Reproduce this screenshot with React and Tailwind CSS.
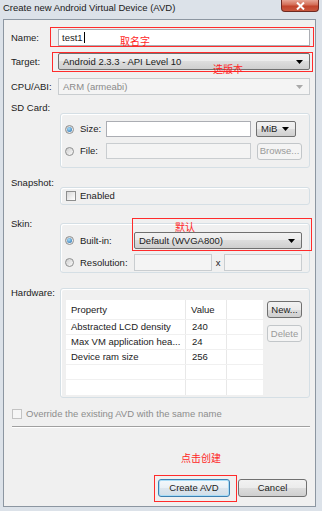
import React from 'react';

const Arrow = ({ color = '#000' }) => (
  <svg width="7" height="4" viewBox="0 0 7 4">
    <path d="M0 0h7L3.5 4z" fill={color} />
  </svg>
);

function Radio({ checked }) {
  return (
    <span className="inline-flex h-[9px] w-[9px] shrink-0 items-center justify-center rounded-full border border-[#8e8f8f] bg-linear-to-br from-[#cfcfcf] to-[#fafafa]">
      {checked && (
        <span className="h-[5px] w-[5px] rounded-full bg-[radial-gradient(circle_at_40%_35%,#a9defa,#1f67a8)]" />
      )}
    </span>
  );
}

function Check({ disabled }) {
  return (
    <span
      className={
        disabled
          ? 'inline-block h-[10px] w-[10px] shrink-0 border border-[#c3c3c3] bg-[#f6f6f6]'
          : 'inline-block h-[10px] w-[10px] shrink-0 border border-[#8e8f8f] bg-linear-to-br from-[#d8d8d8] to-white'
      }
    />
  );
}

function Combo({ text, className = '', disabled }) {
  if (disabled) {
    return (
      <div className={`flex items-center justify-between border border-[#c9cdd0] bg-[#f4f4f4] pl-[4px] pr-[6px] text-[#8a8a8a] ${className}`}>
        <span>{text}</span>
        <Arrow color="#a9a9a9" />
      </div>
    );
  }
  return (
    <div className={`flex items-center justify-between rounded-[2px] border border-[#707070] bg-[linear-gradient(#f2f2f2,#ebebeb_50%,#dddddd_50%,#cfcfcf)] pl-[4px] pr-[6px] ${className}`}>
      <span>{text}</span>
      <Arrow />
    </div>
  );
}

function Btn({ children, className = '', disabled, focus }) {
  let look = 'border-[#707070] bg-[linear-gradient(#f2f2f2,#ebebeb_50%,#dddddd_50%,#cfcfcf)]';
  if (disabled) look = 'border-[#c2c6c9] bg-[#f4f4f4] text-[#9a9a9a]';
  if (focus) look = 'border-[#3c7fb1] bg-[linear-gradient(#f3f8fb,#e9f0f5_50%,#dce6ee_50%,#d3dee8)] shadow-[inset_0_0_0_1px_#a9dcf6]';
  return (
    <div className={`flex items-center justify-center rounded-[3px] border ${look} ${className}`}>
      {children}
    </div>
  );
}

function Row({ label, children, className = '' }) {
  return (
    <div className={`flex h-[17px] items-center ${className}`}>
      <span className="w-[47px] shrink-0">{label}</span>
      {children}
    </div>
  );
}

const Group = ({ className = '', children }) => (
  <div className={`ml-[2px] flex-1 rounded-[3px] border border-[#d5dfe5] shadow-[inset_1px_1px_0_#fff] ${className}`}>
    {children}
  </div>
);

const hw = [
  ['Abstracted LCD density', '240'],
  ['Max VM application hea...', '24'],
  ['Device ram size', '256'],
  ['', ''],
  ['', ''],
];

export default function App() {
  return (
    <div className="relative h-[511px] w-[322px] overflow-hidden whitespace-nowrap bg-[#dce2e9] font-['Liberation_Sans',Arial,sans-serif] text-[9.5px] leading-none text-[#1b1b1b]">
      <div className="flex h-[19px] items-start justify-between pl-[3px] pr-[3px]">
        <span className="pt-[3px] text-[9.5px] text-[#202020]">Create new Android Virtual Device (AVD)</span>
        <div className="flex h-[12px] w-[38px] items-center justify-center rounded-b-[4px] border border-t-0 border-[#6e2a22] bg-[linear-gradient(#e7a595,#d36c55_45%,#c2442c_55%,#c9583f)]">
          <svg width="9" height="8" viewBox="0 0 9 8">
            <path d="M1 0.5 L8 7.5 M8 0.5 L1 7.5" stroke="#fff" strokeWidth="2" />
          </svg>
        </div>
      </div>

      <div className="ml-[3px] flex h-[488px] w-[313px] flex-col border border-[#8c96a1] bg-[#f0f0f0] pb-[9px] pl-[7px] pr-[5px] pt-[9px]">
        <Row label="Name:">
          <div className="flex h-[17px] flex-1 items-center border border-[#abadb3] bg-white pl-[3px]">
            <span>test1</span>
            <span className="ml-[1px] h-[11px] w-[1px] bg-black" />
          </div>
        </Row>
        <Row label="Target:" className="mt-[7px]">
          <Combo text="Android 2.3.3 - API Level 10" className="h-[17px] flex-1" />
        </Row>
        <Row label="CPU/ABI:" className="mt-[8px]">
          <Combo text="ARM (armeabi)" className="h-[17px] flex-1" disabled />
        </Row>

        {/* SD card */}
        <div className="mt-[6px] flex items-start">
          <span className="flex h-[13px] w-[47px] shrink-0 items-center">SD Card:</span>
          <Group className="mt-[12px] h-[55px] pt-[7px]">
            <div className="flex h-[16px] items-center">
              <div className="flex w-[45px] items-center gap-[6px] pl-[4px]">
                <Radio checked />
                <span>Size:</span>
              </div>
              <div className="h-[16px] w-[145px] border border-[#abadb3] bg-white" />
              <Combo text="MiB" className="ml-[5px] h-[16px] w-[40px]" />
            </div>
            <div className="mt-[6px] flex h-[16px] items-center">
              <div className="flex w-[45px] items-center gap-[6px] pl-[4px]">
                <Radio />
                <span>File:</span>
              </div>
              <div className="h-[16px] w-[145px] border border-[#c9cdd0] bg-[#f4f4f4]" />
              <Btn disabled className="ml-[6px] h-[17px] w-[45px]">Browse...</Btn>
            </div>
          </Group>
        </div>

        {/* Snapshot */}
        <div className="mt-[8px] flex items-start">
          <span className="flex h-[13px] w-[47px] shrink-0 items-center">Snapshot:</span>
          <Group className="mt-[11px] flex h-[18px] items-center gap-[4px] pl-[5px]">
            <Check />
            <span>Enabled</span>
          </Group>
        </div>

        {/* Skin */}
        <div className="mt-[12px] flex items-start">
          <span className="flex h-[13px] w-[47px] shrink-0 items-center">Skin:</span>
          <Group className="mt-[6px] h-[50px] pt-[8px]">
            <div className="flex h-[17px] items-center">
              <div className="flex w-[73px] items-center gap-[6px] pl-[4px]">
                <Radio checked />
                <span>Built-in:</span>
              </div>
              <Combo text="Default (WVGA800)" className="h-[17px] w-[168px]" />
            </div>
            <div className="mt-[5px] flex h-[17px] items-center">
              <div className="flex w-[73px] items-center gap-[6px] pl-[4px]">
                <Radio />
                <span>Resolution:</span>
              </div>
              <div className="h-[17px] w-[78px] border border-[#c9cdd0] bg-[#f4f4f4]" />
              <span className="w-[12px] text-center">x</span>
              <div className="h-[17px] w-[78px] border border-[#c9cdd0] bg-[#f4f4f4]" />
            </div>
          </Group>
        </div>

        {/* Hardware */}
        <div className="mt-[13px] flex items-start">
          <span className="flex h-[13px] w-[47px] shrink-0 items-center">Hardware:</span>
          <Group className="mt-[2px] flex h-[110px] items-start pl-[5px] pt-[11px]">
            <div className="flex h-[95px] w-[197px] flex-col bg-white">
              <div className="flex h-[20px] border-b border-[#f0f0f0]">
                <span className="flex w-[120px] items-center border-r border-[#e8e8e8] pl-[5px]">Property</span>
                <span className="flex w-[41px] items-center border-r border-[#e8e8e8] pl-[5px]">Value</span>
                <span className="flex-1" />
              </div>
              {hw.map(([p, v], i) => (
                <div key={i} className="flex h-[15px] border-b border-[#f0f0f0] last:border-b-0">
                  <span className="flex w-[120px] items-center overflow-hidden border-r border-[#e8e8e8] pl-[5px]">{p}</span>
                  <span className="flex w-[41px] items-center border-r border-[#e8e8e8] pl-[6px]">{v}</span>
                  <span className="flex-1" />
                </div>
              ))}
            </div>
            <div className="ml-[4px] flex flex-col gap-[7px] pt-[1px]">
              <Btn className="h-[17px] w-[35px]">New...</Btn>
              <Btn disabled className="h-[17px] w-[35px]">Delete</Btn>
            </div>
          </Group>
        </div>

        <div className="mt-[9px] flex h-[13px] items-center gap-[4px] pl-[1px] text-[#8d8d8d]">
          <Check disabled />
          <span>Override the existing AVD with the same name</span>
        </div>
        <div className="mt-[6px] ml-[1px] h-[2px] border-t border-b border-t-[#a0a0a0] border-b-white" />

        <div className="mt-auto flex justify-end gap-[8px] pr-[3px]">
          <Btn focus className="h-[18px] w-[72px]">Create AVD</Btn>
          <Btn className="h-[18px] w-[69px]">Cancel</Btn>
        </div>
      </div>

      {/* annotations */}
      <div className="absolute left-[50px] top-[27px] h-[20px] w-[264px] border border-[#ff2b2b]" />
      <span className="absolute left-[120px] top-[35px] font-['Noto_Sans_CJK_SC',sans-serif] text-[10px] leading-[12px] text-[#ff1f1f]">取名字</span>
      <div className="absolute left-[52px] top-[52px] h-[20px] w-[261px] border border-[#ff2b2b]" />
      <span className="absolute left-[213px] top-[63px] font-['Noto_Sans_CJK_SC',sans-serif] text-[10px] leading-[12px] text-[#ff1f1f]">选版本</span>
      <div className="absolute left-[132px] top-[218px] h-[33px] w-[180px] border border-[#ff2b2b]" />
      <span className="absolute left-[175px] top-[221px] font-['Noto_Sans_CJK_SC',sans-serif] text-[10px] leading-[12px] text-[#ff1f1f]">默认</span>
      <span className="absolute left-[181px] top-[452px] font-['Noto_Sans_CJK_SC',sans-serif] text-[10px] leading-[12px] text-[#ff1f1f]">点击创建</span>
      <div className="absolute left-[154px] top-[475px] h-[27px] w-[83px] border border-[#ff2b2b]" />
    </div>
  );
}
